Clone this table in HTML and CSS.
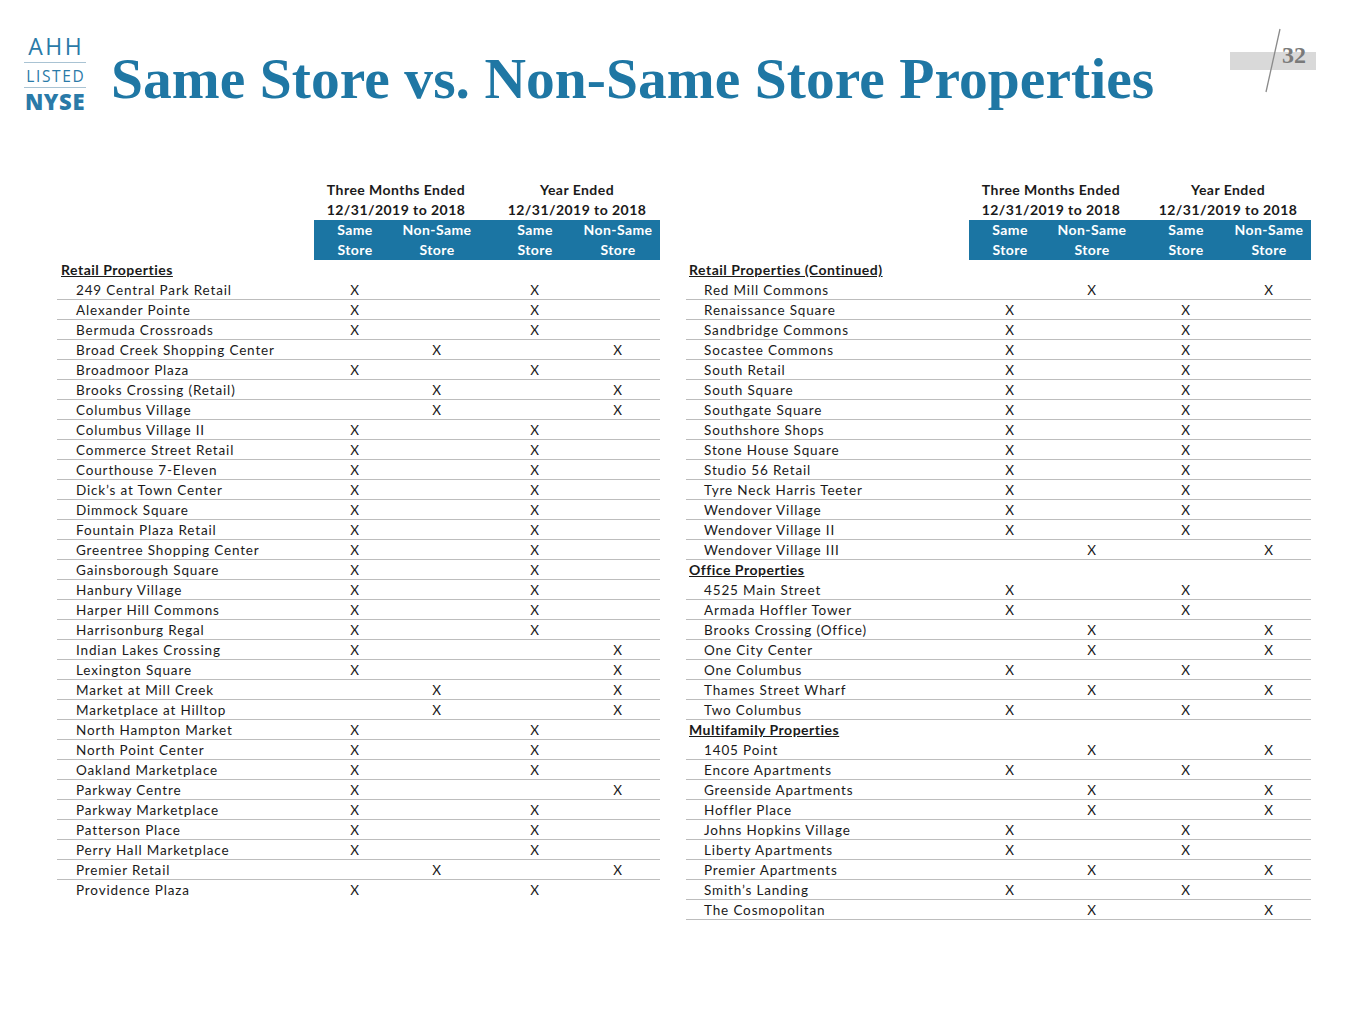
FILE: index.html
```html
<!DOCTYPE html>
<html lang="en">
<head>
<meta charset="utf-8">
<title>Same Store vs. Non-Same Store Properties</title>
<link rel="stylesheet" href="styles.css">
</head>
<body>
<div class="slide">
  <header class="top">
    <div class="logo">
      <div class="logo-ahh">AHH</div>
      <div class="logo-listed">LISTED</div>
      <div class="logo-nyse">NYSE</div>
    </div>
    <h1 class="title">Same Store vs. Non-Same Store Properties</h1>
    <div class="pagenum">
      <div class="pagebar"></div>
      <span class="pagetext">32</span>
      <svg class="slash" width="20" height="66" viewBox="0 0 20 66"><line x1="16" y1="1" x2="2" y2="64" stroke="#8a8a8a" stroke-width="1.3"/></svg>
    </div>
  </header>

  <main class="tables">
    <table class="grid grid-left">
      <colgroup><col class="c-name-l"><col class="c-x"><col class="c-x"><col class="c-sp-l"><col class="c-x"><col class="c-x4"></colgroup>
      <thead>
        <tr class="hd"><th></th><th colspan="2">Three Months Ended</th><th></th><th colspan="2">Year Ended</th></tr>
        <tr class="hd"><th></th><th colspan="2">12/31/2019 to 2018</th><th></th><th colspan="2">12/31/2019 to 2018</th></tr>
        <tr class="blue"><th class="blank"></th><th>Same<br>Store</th><th>Non-Same<br>Store</th><th></th><th>Same<br>Store</th><th>Non-Same<br>Store</th></tr>
      </thead>
      <tbody>
        <tr class="sec"><td colspan="6"><u>Retail Properties</u></td></tr>
        <tr><td>249 Central Park Retail</td><td>X</td><td></td><td></td><td>X</td><td></td></tr>
        <tr><td>Alexander Pointe</td><td>X</td><td></td><td></td><td>X</td><td></td></tr>
        <tr><td>Bermuda Crossroads</td><td>X</td><td></td><td></td><td>X</td><td></td></tr>
        <tr><td>Broad Creek Shopping Center</td><td></td><td>X</td><td></td><td></td><td>X</td></tr>
        <tr><td>Broadmoor Plaza</td><td>X</td><td></td><td></td><td>X</td><td></td></tr>
        <tr><td>Brooks Crossing (Retail)</td><td></td><td>X</td><td></td><td></td><td>X</td></tr>
        <tr><td>Columbus Village</td><td></td><td>X</td><td></td><td></td><td>X</td></tr>
        <tr><td>Columbus Village II</td><td>X</td><td></td><td></td><td>X</td><td></td></tr>
        <tr><td>Commerce Street Retail</td><td>X</td><td></td><td></td><td>X</td><td></td></tr>
        <tr><td>Courthouse 7-Eleven</td><td>X</td><td></td><td></td><td>X</td><td></td></tr>
        <tr><td>Dick’s at Town Center</td><td>X</td><td></td><td></td><td>X</td><td></td></tr>
        <tr><td>Dimmock Square</td><td>X</td><td></td><td></td><td>X</td><td></td></tr>
        <tr><td>Fountain Plaza Retail</td><td>X</td><td></td><td></td><td>X</td><td></td></tr>
        <tr><td>Greentree Shopping Center</td><td>X</td><td></td><td></td><td>X</td><td></td></tr>
        <tr><td>Gainsborough Square</td><td>X</td><td></td><td></td><td>X</td><td></td></tr>
        <tr><td>Hanbury Village</td><td>X</td><td></td><td></td><td>X</td><td></td></tr>
        <tr><td>Harper Hill Commons</td><td>X</td><td></td><td></td><td>X</td><td></td></tr>
        <tr><td>Harrisonburg Regal</td><td>X</td><td></td><td></td><td>X</td><td></td></tr>
        <tr><td>Indian Lakes Crossing</td><td>X</td><td></td><td></td><td></td><td>X</td></tr>
        <tr><td>Lexington Square</td><td>X</td><td></td><td></td><td></td><td>X</td></tr>
        <tr><td>Market at Mill Creek</td><td></td><td>X</td><td></td><td></td><td>X</td></tr>
        <tr><td>Marketplace at Hilltop</td><td></td><td>X</td><td></td><td></td><td>X</td></tr>
        <tr><td>North Hampton Market</td><td>X</td><td></td><td></td><td>X</td><td></td></tr>
        <tr><td>North Point Center</td><td>X</td><td></td><td></td><td>X</td><td></td></tr>
        <tr><td>Oakland Marketplace</td><td>X</td><td></td><td></td><td>X</td><td></td></tr>
        <tr><td>Parkway Centre</td><td>X</td><td></td><td></td><td></td><td>X</td></tr>
        <tr><td>Parkway Marketplace</td><td>X</td><td></td><td></td><td>X</td><td></td></tr>
        <tr><td>Patterson Place</td><td>X</td><td></td><td></td><td>X</td><td></td></tr>
        <tr><td>Perry Hall Marketplace</td><td>X</td><td></td><td></td><td>X</td><td></td></tr>
        <tr><td>Premier Retail</td><td></td><td>X</td><td></td><td></td><td>X</td></tr>
        <tr class="last"><td>Providence Plaza</td><td>X</td><td></td><td></td><td>X</td><td></td></tr>
      </tbody>
    </table>

    <table class="grid grid-right">
      <colgroup><col class="c-name-r"><col class="c-x"><col class="c-x"><col class="c-sp-r"><col class="c-x"><col class="c-x4"></colgroup>
      <thead>
        <tr class="hd"><th></th><th colspan="2">Three Months Ended</th><th></th><th colspan="2">Year Ended</th></tr>
        <tr class="hd"><th></th><th colspan="2">12/31/2019 to 2018</th><th></th><th colspan="2">12/31/2019 to 2018</th></tr>
        <tr class="blue"><th class="blank"></th><th>Same<br>Store</th><th>Non-Same<br>Store</th><th></th><th>Same<br>Store</th><th>Non-Same<br>Store</th></tr>
      </thead>
      <tbody>
        <tr class="sec"><td colspan="6"><u>Retail Properties (Continued)</u></td></tr>
        <tr><td>Red Mill Commons</td><td></td><td>X</td><td></td><td></td><td>X</td></tr>
        <tr><td>Renaissance Square</td><td>X</td><td></td><td></td><td>X</td><td></td></tr>
        <tr><td>Sandbridge Commons</td><td>X</td><td></td><td></td><td>X</td><td></td></tr>
        <tr><td>Socastee Commons</td><td>X</td><td></td><td></td><td>X</td><td></td></tr>
        <tr><td>South Retail</td><td>X</td><td></td><td></td><td>X</td><td></td></tr>
        <tr><td>South Square</td><td>X</td><td></td><td></td><td>X</td><td></td></tr>
        <tr><td>Southgate Square</td><td>X</td><td></td><td></td><td>X</td><td></td></tr>
        <tr><td>Southshore Shops</td><td>X</td><td></td><td></td><td>X</td><td></td></tr>
        <tr><td>Stone House Square</td><td>X</td><td></td><td></td><td>X</td><td></td></tr>
        <tr><td>Studio 56 Retail</td><td>X</td><td></td><td></td><td>X</td><td></td></tr>
        <tr><td>Tyre Neck Harris Teeter</td><td>X</td><td></td><td></td><td>X</td><td></td></tr>
        <tr><td>Wendover Village</td><td>X</td><td></td><td></td><td>X</td><td></td></tr>
        <tr><td>Wendover Village II</td><td>X</td><td></td><td></td><td>X</td><td></td></tr>
        <tr><td>Wendover Village III</td><td></td><td>X</td><td></td><td></td><td>X</td></tr>
        <tr class="sec"><td colspan="6"><u>Office Properties</u></td></tr>
        <tr><td>4525 Main Street</td><td>X</td><td></td><td></td><td>X</td><td></td></tr>
        <tr><td>Armada Hoffler Tower</td><td>X</td><td></td><td></td><td>X</td><td></td></tr>
        <tr><td>Brooks Crossing (Office)</td><td></td><td>X</td><td></td><td></td><td>X</td></tr>
        <tr><td>One City Center</td><td></td><td>X</td><td></td><td></td><td>X</td></tr>
        <tr><td>One Columbus</td><td>X</td><td></td><td></td><td>X</td><td></td></tr>
        <tr><td>Thames Street Wharf</td><td></td><td>X</td><td></td><td></td><td>X</td></tr>
        <tr><td>Two Columbus</td><td>X</td><td></td><td></td><td>X</td><td></td></tr>
        <tr class="sec"><td colspan="6"><u>Multifamily Properties</u></td></tr>
        <tr><td>1405 Point</td><td></td><td>X</td><td></td><td></td><td>X</td></tr>
        <tr><td>Encore Apartments</td><td>X</td><td></td><td></td><td>X</td><td></td></tr>
        <tr><td>Greenside Apartments</td><td></td><td>X</td><td></td><td></td><td>X</td></tr>
        <tr><td>Hoffler Place</td><td></td><td>X</td><td></td><td></td><td>X</td></tr>
        <tr><td>Johns Hopkins Village</td><td>X</td><td></td><td></td><td>X</td><td></td></tr>
        <tr><td>Liberty Apartments</td><td>X</td><td></td><td></td><td>X</td><td></td></tr>
        <tr><td>Premier Apartments</td><td></td><td>X</td><td></td><td></td><td>X</td></tr>
        <tr><td>Smith’s Landing</td><td>X</td><td></td><td></td><td>X</td><td></td></tr>
        <tr><td>The Cosmopolitan</td><td></td><td>X</td><td></td><td></td><td>X</td></tr>
      </tbody>
    </table>
  </main>
</div>
</body>
</html>
```

FILE: styles.css
```css
html, body {
  margin: 0;
  padding: 0;
  background: #ffffff;
}

.slide {
  width: 1365px;
  height: 1024px;
  position: relative;
  font-family: "Lato", "Open Sans", sans-serif;
  color: #1a1a1a;
}

.top {
  display: flex;
  align-items: flex-start;
  height: 180px;
  position: relative;
}

.logo {
  margin: 34px 0 0 24px;
  width: 62px;
  color: #2a7aa8;
  font-family: "Open Sans", "Lato", sans-serif;
  text-align: center;
}

.logo-ahh {
  font-size: 23px;
  font-weight: 400;
  letter-spacing: 2.6px;
  text-indent: 2.6px;
  line-height: 24px;
  padding-bottom: 4px;
  border-bottom: 1px solid #a9c3d3;
}

.logo-listed {
  font-size: 15.5px;
  font-weight: 400;
  letter-spacing: 1.6px;
  text-indent: 1.6px;
  line-height: 18px;
  padding: 4px 0 2px;
  border-bottom: 1px solid #a9c3d3;
}

.logo-nyse {
  font-size: 22px;
  font-weight: 800;
  letter-spacing: 0.6px;
  line-height: 24px;
  padding-top: 1px;
}

.title {
  margin: 44px 0 0 25px;
  font-family: "Liberation Serif", "Times New Roman", serif;
  font-weight: 700;
  font-size: 57.5px;
  line-height: 70px;
  color: #1f77a4;
  letter-spacing: 0.05px;
  white-space: nowrap;
}

.pagenum {
  position: absolute;
  left: 1230px;
  top: 28px;
  width: 87px;
  height: 64px;
}

.pagebar {
  position: absolute;
  left: 0;
  top: 24px;
  width: 86px;
  height: 18px;
  background: #d9d9d9;
}

.pagetext {
  position: absolute;
  left: 52px;
  top: 14px;
  font-family: "Liberation Serif", "Times New Roman", serif;
  font-weight: 700;
  font-size: 24px;
  line-height: 26px;
  color: #7a7a7a;
}

.slash {
  position: absolute;
  left: 34px;
  top: 0;
}

.tables {
  display: flex;
  align-items: flex-start;
  gap: 26px;
  padding-left: 57px;
}

.grid {
  border-collapse: separate;
  border-spacing: 0;
  table-layout: fixed;
  font-size: 13.5px;
  letter-spacing: 0.85px;
}

.grid-left { width: 603px; }
.grid-right { width: 625px; }

.c-name-l { width: 257px; }
.c-name-r { width: 283px; }
.c-x { width: 82px; }
.c-x4 { width: 84px; }
.c-sp-l { width: 16px; }
.c-sp-r { width: 12px; }

.grid th, .grid td {
  padding: 0;
  white-space: nowrap;
  overflow: hidden;
}

.hd th {
  font-size: 14px;
  font-weight: 700;
  text-align: center;
  line-height: 20px;
  letter-spacing: 0.45px;
}

.blue th {
  background: #1b75a3;
  color: #ffffff;
  font-size: 14px;
  font-weight: 700;
  text-align: center;
  line-height: 20px;
  letter-spacing: 0.4px;
}

.blue th.blank {
  background: transparent;
}

.grid tbody td {
  padding-top: 1px;
  line-height: 18px;
  border-bottom: 1px solid #bdbdbd;
  text-align: center;
}

.grid tbody td:first-child {
  text-align: left;
  padding-left: 19px;
}

.grid-right tbody td:first-child {
  padding-left: 18px;
}

.grid tbody tr.sec td {
  border-bottom: none;
  padding-top: 0;
  line-height: 20px;
  font-size: 14px;
  font-weight: 700;
  padding-left: 4px;
  letter-spacing: 0.5px;
}

.grid-right tbody tr.sec td {
  padding-left: 3px;
}

.grid tbody tr.last td {
  border-bottom: none;
  padding-top: 0;
  line-height: 20px;
}
```
